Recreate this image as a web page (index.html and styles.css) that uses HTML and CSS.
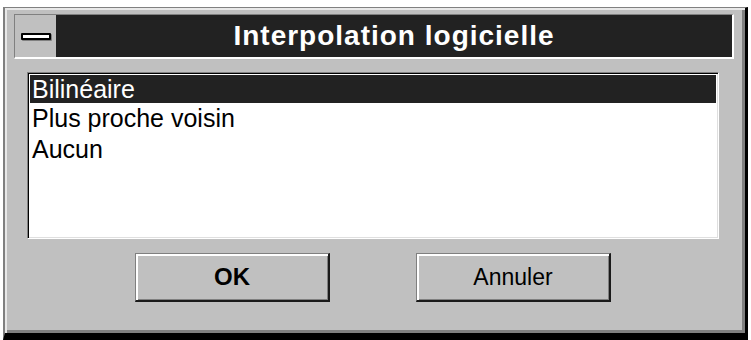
FILE: index.html
```html
<!DOCTYPE html>
<html>
<head>
<meta charset="utf-8">
<link rel="stylesheet" href="styles.css">
</head>
<body>
<div class="window">
  <div class="titlebar">
    <div class="sysmenu"><span class="sysbar"></span></div>
    <div class="title">Interpolation logicielle</div>
  </div>
  <div class="list">
    <div class="item selected">Bilinéaire</div>
    <div class="item">Plus proche voisin</div>
    <div class="item">Aucun</div>
  </div>
  <div class="buttons">
    <div class="btn btn-ok">OK</div>
    <div class="btn">Annuler</div>
  </div>
</div>
</body>
</html>
```
FILE: styles.css
```css
html, body {
  margin: 0;
  padding: 0;
  background: #ffffff;
  overflow: hidden;
}
.window {
  margin: 7px 0 0 3px;
  width: 745px;
  height: 333px;
  box-sizing: border-box;
  background: #c0c0c0;
  border-top: 1px solid #808080;
  border-left: 2px solid #808080;
  border-right: 3px solid #000;
  border-bottom: 7px solid #000;
  box-shadow: inset 2px 2px 0 #e8e8e8, inset -3px -3px 0 #808080;
  padding-top: 6px;
  font-family: "Liberation Sans", Arial, sans-serif;
}
.titlebar {
  margin-left: 9px;
  width: 720px;
  height: 45px;
  box-sizing: border-box;
  border-top: 1px solid #808080;
  border-left: 1px solid #808080;
  border-right: 2px solid #fff;
  border-bottom: 2px solid #fff;
  display: flex;
}
.sysmenu {
  width: 41px;
  background: #c0c0c0;
  display: flex;
  align-items: center;
  justify-content: center;
}
.sysbar {
  display: block;
  width: 30px;
  height: 7px;
  box-sizing: border-box;
  border: 2px solid #000;
  background: #fff;
  box-shadow: 1px 1px 0 #808080;
  border-radius: 1px;
}
.title {
  flex: 1;
  background: #222222;
  color: #ffffff;
  font-weight: bold;
  font-size: 28px;
  letter-spacing: 1px;
  text-align: center;
  line-height: 42px;
}
.list {
  margin: 13px 0 0 22px;
  width: 692px;
  height: 167px;
  box-sizing: border-box;
  background: #fff;
  border-top: 1px solid #808080;
  border-left: 1px solid #808080;
  border-right: 1px solid #fff;
  border-bottom: 1px solid #fff;
  box-shadow: inset 1px 1px 0 #000, inset -1px -1px 0 #dfdfdf;
  padding: 2px 2px 0 2px;
  font-size: 25px;
  color: #000;
}
.item {
  height: 31px;
  line-height: 31px;
  padding-left: 2px;
}
.item.selected {
  height: 28px;
  line-height: 29px;
  background: #222222;
  color: #fff;
}
.buttons {
  display: flex;
  gap: 86px;
  padding: 14px 0 0 130px;
}
.btn {
  width: 195px;
  height: 49px;
  box-sizing: border-box;
  border-top: 1px solid #808080;
  border-left: 1px solid #808080;
  border-right: 2px solid #1a1a1a;
  border-bottom: 2px solid #1a1a1a;
  box-shadow: inset 2px 2px 0 #fff, inset -1px -1px 0 #808080;
  display: flex;
  align-items: center;
  justify-content: center;
  font-size: 23px;
  color: #000;
  background: #c0c0c0;
}
.btn-ok {
  font-weight: bold;
  font-size: 24px;
}
```
